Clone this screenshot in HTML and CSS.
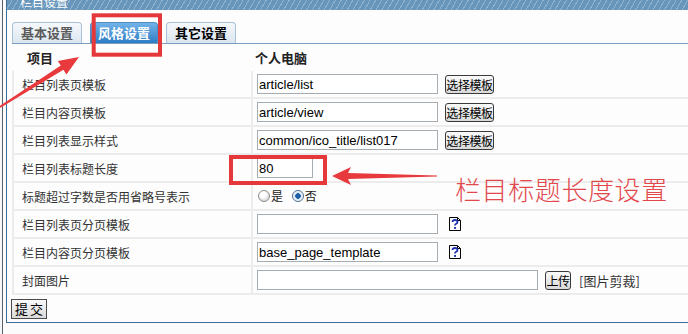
FILE: index.html
```html
<!DOCTYPE html>
<html lang="zh-CN">
<head>
    <meta charset="UTF-8">
    <title>栏目设置</title>
    <link rel="stylesheet" href="styles.css">
</head>
<body>

    <div class="shell">
        <div class="panel">
            <div class="panel-title"><span>栏目设置</span></div>
            <div class="panel-body">
                <ul class="tabs">
                    <li class="tab">基本设置</li>
                    <li class="tab tab-active">风格设置</li>
                    <li class="tab tab-hover">其它设置</li>
                </ul>
                <table class="form-table">
                    <thead>
                        <tr>
                            <th class="col-label">项目</th>
                            <th class="col-value">个人电脑</th>
                        </tr>
                    </thead>
                    <tbody>
                        <tr>
                            <td class="col-label">栏目列表页模板</td>
                            <td class="col-value"><input type="text" value="article/list"><button class="btn">选择模板</button></td>
                        </tr>
                        <tr>
                            <td class="col-label">栏目内容页模板</td>
                            <td class="col-value"><input type="text" value="article/view"><button class="btn">选择模板</button></td>
                        </tr>
                        <tr>
                            <td class="col-label">栏目列表显示样式</td>
                            <td class="col-value"><input type="text" value="common/ico_title/list017"><button class="btn">选择模板</button></td>
                        </tr>
                        <tr>
                            <td class="col-label">栏目列表标题长度</td>
                            <td class="col-value"><input type="text" class="input-short" value="80"></td>
                        </tr>
                        <tr>
                            <td class="col-label">标题超过字数是否用省略号表示</td>
                            <td class="col-value">
                                <label class="radio"><input type="radio" name="ellipsis">是</label>
                                <label class="radio"><input type="radio" name="ellipsis" checked>否</label>
                            </td>
                        </tr>
                        <tr>
                            <td class="col-label">栏目列表页分页模板</td>
                            <td class="col-value"><input type="text" value=""><span class="help">
                                <svg width="12" height="14" viewBox="0 0 12 14">
                                    <path d="M0.5 0.5 H8.5 L11.5 3.5 V13.5 H0.5 Z" fill="#fff" stroke="#000"/>
                                    <path d="M8.5 0.5 V3.5 H11.5" fill="none" stroke="#000"/>
                                    <path d="M3.5 5 Q3.5 3 6 3 Q8.5 3 8.5 5 Q8.5 6.3 6.8 7 Q6 7.4 6 8.6" fill="none" stroke="#1a2fb0" stroke-width="1.8"/>
                                    <rect x="5.1" y="10" width="1.9" height="1.9" fill="#1a2fb0"/>
                                </svg>
                            </span></td>
                        </tr>
                        <tr>
                            <td class="col-label">栏目内容页分页模板</td>
                            <td class="col-value"><input type="text" value="base_page_template"><span class="help">
                                <svg width="12" height="14" viewBox="0 0 12 14">
                                    <path d="M0.5 0.5 H8.5 L11.5 3.5 V13.5 H0.5 Z" fill="#fff" stroke="#000"/>
                                    <path d="M8.5 0.5 V3.5 H11.5" fill="none" stroke="#000"/>
                                    <path d="M3.5 5 Q3.5 3 6 3 Q8.5 3 8.5 5 Q8.5 6.3 6.8 7 Q6 7.4 6 8.6" fill="none" stroke="#1a2fb0" stroke-width="1.8"/>
                                    <rect x="5.1" y="10" width="1.9" height="1.9" fill="#1a2fb0"/>
                                </svg>
                            </span></td>
                        </tr>
                        <tr>
                            <td class="col-label">封面图片</td>
                            <td class="col-value"><input type="text" class="input-wide" value=""><button class="btn btn-small">上传</button><span class="crop">[图片剪裁]</span></td>
                        </tr>
                    </tbody>
                </table>
                <div class="actions">
                    <button class="btn btn-submit">提交</button>
                </div>
            </div>
        </div>
    </div>

    <!-- red annotations drawn over the screenshot -->
    <svg class="marks" width="688" height="334" viewBox="0 0 688 334">
        <rect x="93.7" y="15.3" width="66.3" height="39.4" fill="none" stroke="#e5383b" stroke-width="4"/>
        <polygon points="79,57 57.8,60.9 60.8,65.6 -0.5,106.2 0.5,107.8 63.4,69.8 66.4,74.5" fill="#e8393c"/>
        <rect x="231" y="157" width="94" height="26" fill="none" stroke="#e5383b" stroke-width="4"/>
        <polygon points="332,176 351,167 348,173 437,175.5 437,176.5 348,179 351,185" fill="#e8393c"/>
    </svg>
    <div class="note">栏目标题长度设置</div>

</body>
</html>
```

FILE: styles.css
```css
body {
    margin: 0;
    width: 688px;
    height: 334px;
    overflow: hidden;
    position: relative;
    background: #f7f7f7;
    font-family: "Noto Sans CJK SC", sans-serif;
    font-size: 12px;
    color: #333;
}
.shell {
    margin-left: 2px;
    padding-left: 3px;
    min-height: 334px;
    border-left: 1px solid #56616c;
    background: #fbfbfb;
}
.panel {
    width: 700px;
    border: 1px solid #3d6c96;
    border-top: 0;
    background: #fdfdfd;
}
.panel-title {
    height: 10px;
    overflow: hidden;
    display: flex;
    align-items: flex-end;
    padding-left: 13px;
    color: #fff;
    background: repeating-linear-gradient(120deg, #6796ba 0 4px, #8db3d0 4px 5px);
}
.panel-title span {
    line-height: 16px;
}
.panel-body {
    padding: 12px 0 3px 5px;
}
.tabs {
    display: flex;
    gap: 8px;
    margin: 0;
    padding: 0;
    list-style: none;
    border-bottom: 1px solid #7b9ec0;
}
.tab {
    box-sizing: border-box;
    width: 70px;
    height: 21px;
    line-height: 20px;
    text-align: center;
    font-size: 13px;
    font-weight: bold;
    color: #5a5a5a;
    border: 1px solid #a9c1d8;
    border-bottom: 0;
    border-radius: 4px 4px 0 0;
    background: linear-gradient(#f5f8fb, #dbe6f0);
}
.tab-active {
    width: 68px;
    color: #fff;
    border-color: #4d8cc4;
    background: linear-gradient(#73b3e8, #2c7cc3);
}
.tab-hover {
    color: #000;
}
.form-table {
    width: 680px;
    border-collapse: separate;
    border-spacing: 0;
}
.form-table th {
    height: 27px;
    padding: 0;
    text-align: left;
    font-size: 13px;
    font-weight: bold;
    color: #222;
}
.form-table th.col-label {
    padding-left: 15px;
}
.form-table th.col-value {
    padding-left: 2px;
}
.form-table td {
    height: 26px;
    padding: 0;
    border-bottom: 2px solid #ececec;
    white-space: nowrap;
}
.form-table td.col-label {
    width: 229px;
    padding-left: 8px;
    border-left: 2px solid #ececec;
    border-right: 2px solid #ececec;
}
.form-table td.col-value {
    padding-left: 4px;
}
.form-table input[type="text"] {
    box-sizing: border-box;
    width: 181px;
    height: 20px;
    padding: 0 1px;
    border: 1px solid #a5acb2;
    font-family: "Liberation Sans", sans-serif;
    font-size: 13px;
    color: #000;
    vertical-align: middle;
}
.form-table input.input-short {
    width: 56px;
}
.form-table input.input-wide {
    width: 281px;
}
.btn {
    box-sizing: border-box;
    width: 49px;
    height: 19px;
    margin-left: 7px;
    padding: 0;
    border: 1px solid #3a3a3a;
    border-radius: 3px;
    background: linear-gradient(#fafafa, #d9d9d9);
    font-family: "Noto Sans CJK SC", sans-serif;
    font-size: 12px;
    line-height: 17px;
    letter-spacing: -0.4px;
    white-space: nowrap;
    overflow: hidden;
    color: #000;
    vertical-align: middle;
}
.btn-small {
    width: 26px;
}
.crop {
    margin-left: 8px;
    font-size: 13px;
    color: #333;
    vertical-align: middle;
}
.help {
    display: inline-block;
    margin-left: 11px;
    vertical-align: middle;
}
.help svg {
    display: block;
}
.radio {
    display: inline-flex;
    align-items: center;
    margin-right: 5px;
    color: #222;
}
.radio input {
    appearance: none;
    width: 12px;
    height: 12px;
    margin: 0 1px 0 1px;
    border: 1px solid #8d8d8d;
    border-radius: 50%;
    background: radial-gradient(circle at 40% 35%, #fff 0 3px, #dcdcdc 6px);
}
.radio input:checked {
    border-color: #4b6a8c;
    background: radial-gradient(circle, #1c5fa6 0 2.5px, #cfe0f0 3px, #fff 5px);
}
.actions {
    padding-top: 3px;
}
.btn-submit {
    width: 36px;
    height: 20px;
    margin-left: -1px;
    border-radius: 0;
    border-color: #4a4a4a;
    font-size: 13px;
    letter-spacing: 2px;
    text-indent: 2px;
}
.marks {
    position: absolute;
    top: 0;
    left: 0;
    pointer-events: none;
}
.note {
    position: absolute;
    left: 455px;
    top: 172px;
    font-size: 26px;
    font-weight: 300;
    line-height: 34px;
    letter-spacing: 0.6px;
    color: #e2474b;
}
```
